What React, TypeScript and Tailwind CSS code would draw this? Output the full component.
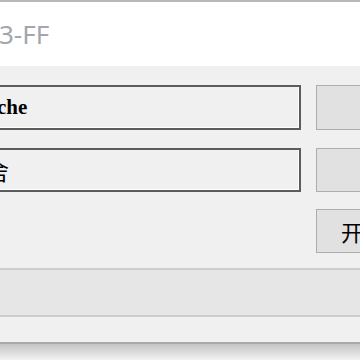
export default function App() {
  const field =
    'h-full w-[321px] shrink-0 flex items-center overflow-hidden border-2 border-[#5c5c5c] bg-[#f0f0f0] shadow-[inset_-1px_-1px_0_#ffffff]'
  const button = 'h-full w-[96px] shrink-0 border border-[#adadad] bg-[#e1e1e1]'

  return (
    <div className="w-[360px] h-[360px] overflow-hidden flex flex-col bg-[#f0f0f0] font-['Noto_Sans','Noto_Sans_CJK_SC',sans-serif]">
      {/* title strip */}
      <div className="h-[2px] bg-[#b9b9b9]" />
      <div className="h-[64px] bg-white flex items-center">
        <span className="ml-[-1px] text-[26px] leading-none text-[#a3a7ad]">3-FF</span>
      </div>

      {/* form rows */}
      <div className="flex flex-col pt-[19px]">
        <div className="flex items-stretch h-[45px] gap-[15px] ml-[-20px]">
          <div className={field}>
            <span className="ml-[15px] text-[21px] leading-none text-black font-['Liberation_Serif',serif] font-bold">
              che
            </span>
          </div>
          <div className={button} />
        </div>

        <div className="flex items-stretch h-[44px] gap-[15px] ml-[-20px] mt-[18px]">
          <div className={field}>
            <span className="ml-[4px] text-[23px] leading-none text-black font-['Noto_Sans_CJK_SC',sans-serif]">
              舍
            </span>
          </div>
          <div className={button} />
        </div>

        <div className="flex justify-start h-[44px] mt-[17px] pl-[316px]">
          <div className="h-full w-[96px] shrink-0 border border-[#adadad] bg-[#e1e1e1] flex items-center pl-[24px] text-[22px] leading-none text-black font-['Noto_Sans_CJK_SC',sans-serif]">
            开始
          </div>
        </div>
      </div>

      {/* status bar */}
      <div className="mt-[15px] h-[2px] bg-[#cdcdcd]" />
      <div className="h-[45px] bg-[#e6e6e6]" />
      <div className="h-[2px] bg-[#cdcdcd]" />
      <div className="h-[25px] bg-[#f0f0f0]" />
      <div className="h-[2px] bg-[#a9a9a9]" />
      <div className="flex-1 bg-gradient-to-b from-[#c4c4c4] to-[#f2f2f2]" />
    </div>
  )
}
